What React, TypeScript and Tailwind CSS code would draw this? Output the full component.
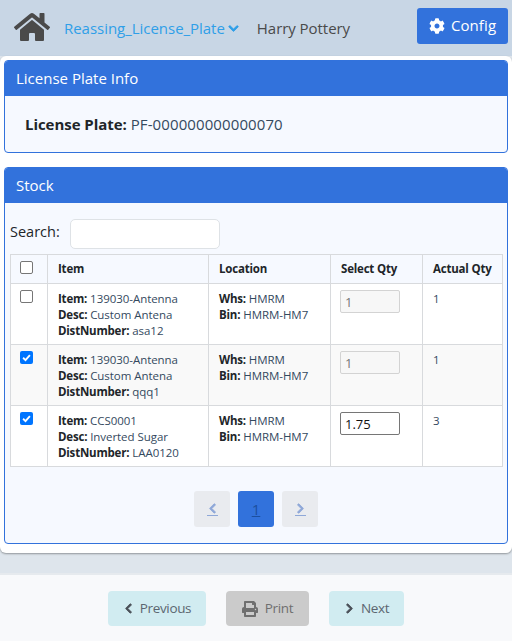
import { FaChevronDown, FaChevronLeft, FaChevronRight, FaCog, FaHome, FaPrint } from "react-icons/fa";

const rows = [
  { item: "139030-Antenna", desc: "Custom Antena", dist: "asa12", qty: "1", actual: "1", checked: false, editable: false },
  { item: "139030-Antenna", desc: "Custom Antena", dist: "qqq1", qty: "1", actual: "1", checked: true, editable: false },
  { item: "CCS0001", desc: "Inverted Sugar", dist: "LAA0120", qty: "1.75", actual: "3", checked: true, editable: true },
];

function Check({ checked }: { checked: boolean }) {
  if (checked) {
    return (
      <span className="flex h-[13px] w-[13px] items-center justify-center rounded-[2px] bg-[#0075ff]">
        <svg viewBox="0 0 12 12" className="h-[11px] w-[11px]">
          <path d="M2.3 6.3 L4.9 8.8 L9.7 3.3" fill="none" stroke="#fff" strokeWidth="2" />
        </svg>
      </span>
    );
  }
  return <span className="block h-[13px] w-[13px] rounded-[2px] border border-[#767676] bg-white" />;
}

function Card({ title, children }: { title: string; children: React.ReactNode }) {
  return (
    <section className="overflow-hidden rounded-[4px] border border-[#3272dc] bg-[#f6f9ff]">
      <h2 className="flex h-[35px] items-center bg-[#3272dc] px-[11px] pb-[1px] text-[15px] font-normal text-white">{title}</h2>
      {children}
    </section>
  );
}

export default function App() {
  return (
    <div className="flex h-[641px] w-[512px] flex-col overflow-hidden bg-[#dee5ec] font-['Open_Sans','Noto_Sans',sans-serif] text-[#212529]">
      <header className="flex h-[56px] shrink-0 items-start bg-[#c8d6e5]">
        <FaHome className="ml-[14px] mt-[9px] text-[36px] text-[#4a4a4a]" />
        <a className="ml-[14px] mt-[18px] flex items-center text-[15px] leading-[20px] tracking-[-0.03px] text-[#2f9fe8]">
          Reassing_License_Plate
          <FaChevronDown className="ml-[3px] text-[11px]" stroke="currentColor" strokeWidth={40} />
        </a>
        <span className="ml-[18px] mt-[18px] text-[15px] leading-[20px] tracking-[-0.05px] text-[#4a4a4a]">Harry Pottery</span>
        <button className="ml-auto mr-[4px] mt-[8px] flex h-[36px] w-[91px] items-center justify-center gap-[6px] rounded-[3px] bg-[#3272dc] pb-[1px] text-[15px] tracking-[0.1px] text-white">
          <FaCog className="text-[16px]" />
          Config
        </button>
      </header>

      <main className="flex h-[497px] shrink-0 flex-col gap-[14px] rounded-[6px] bg-white px-[4px] pt-[4px] shadow-[0_1px_2px_rgba(0,0,0,0.35)]">
        <Card title="License Plate Info">
          <p className="flex h-[56px] items-center px-[20px] text-[15px] tracking-[0.1px] text-[#34495e]">
            <b className="mr-[4px] font-bold tracking-[-0.05px] text-[#212529]">License Plate:</b>PF-000000000000070
          </p>
        </Card>

        <Card title="Stock">
          <div className="h-[340px] px-[5px]">
            <div className="flex h-[51px] items-end pb-[5px]">
              <div className="flex items-center">
                <label className="pb-[5px] text-[14.5px]">Search:</label>
                <input className="ml-[10px] h-[30px] w-[150px] rounded-[5px] border border-[#dee2e6] bg-white" />
              </div>
            </div>
            <table className="w-[492px] table-fixed border-collapse text-[11.5px] leading-[16px] tracking-[-0.05px] text-[#34495e]">
              <colgroup>
                <col className="w-[37px]" />
                <col className="w-[161px]" />
                <col className="w-[122px]" />
                <col className="w-[92px]" />
                <col className="w-[80px]" />
              </colgroup>
              <thead>
                <tr className="h-[29px] text-left tracking-[-0.2px] text-[#212529]">
                  <th className="border border-[#d8dadd] px-[9px] pt-[6px] align-top"><Check checked={false} /></th>
                  <th className="border border-[#d8dadd] px-[10px] font-bold">Item</th>
                  <th className="border border-[#d8dadd] px-[10px] font-bold">Location</th>
                  <th className="border border-[#d8dadd] px-[10px] font-bold">Select Qty</th>
                  <th className="border border-[#d8dadd] px-[10px] font-bold">Actual Qty</th>
                </tr>
              </thead>
              <tbody>
                {rows.map((row) => (
                  <tr key={row.dist} className={row.checked && !row.editable ? "h-[61px] bg-[#f9f9f9]" : "h-[61px] bg-white"}>
                    <td className="border border-[#d8dadd] px-[9px] pt-[6px] align-top"><Check checked={row.checked} /></td>
                    <td className="border border-[#d8dadd] px-[10px] pt-[7px] align-top">
                      <div><b className="tracking-[-0.2px] text-[#212529]">Item:</b> {row.item}</div>
                      <div><b className="tracking-[-0.2px] text-[#212529]">Desc:</b> {row.desc}</div>
                      <div><b className="tracking-[-0.2px] text-[#212529]">DistNumber:</b> {row.dist}</div>
                    </td>
                    <td className="border border-[#d8dadd] px-[10px] pt-[7px] align-top">
                      <div><b className="tracking-[-0.2px] text-[#212529]">Whs:</b> HMRM</div>
                      <div><b className="tracking-[-0.2px] text-[#212529]">Bin:</b> HMRM-HM7</div>
                    </td>
                    <td className="border border-[#d8dadd] px-[9px] pt-[6px] align-top">
                      <input
                        readOnly
                        value={row.qty}
                        className={row.editable
                          ? "block h-[23px] w-[60px] rounded-[2px] border border-[#767676] bg-white px-[4px] text-[13px] text-[#111]"
                          : "block h-[23px] w-[60px] rounded-[2px] border border-[#d3d3d3] bg-[#f7f7f7] px-[4px] text-[13px] text-[#777]"}
                      />
                    </td>
                    <td className="border border-[#d8dadd] px-[10px] pt-[7px] align-top">{row.actual}</td>
                  </tr>
                ))}
              </tbody>
            </table>
            <nav className="mt-[24px] flex justify-center gap-[8px]">
              <span className="flex h-[36px] w-[36px] items-center justify-center rounded-[3px] bg-[#e9ebef] text-[#8fa8d8]">
                <span className="border-b border-[#8fa8d8] pb-[1px]"><FaChevronLeft className="text-[11px]" stroke="currentColor" strokeWidth={40} /></span>
              </span>
              <span className="flex h-[36px] w-[36px] items-center justify-center rounded-[3px] bg-[#3272dc] text-[15px] text-[#1c4f9f] underline">1</span>
              <span className="flex h-[36px] w-[36px] items-center justify-center rounded-[3px] bg-[#e9ebef] text-[#8fa8d8]">
                <span className="border-b border-[#8fa8d8] pb-[1px]"><FaChevronRight className="text-[11px]" stroke="currentColor" strokeWidth={40} /></span>
              </span>
            </nav>
          </div>
        </Card>
      </main>

      <footer className="mt-[20px] flex flex-1 items-start justify-center gap-[20px] border-t-2 border-[#e6eaee] bg-[#f8f9fb] pt-[16px] text-[13.5px] tracking-[-0.35px] text-[#5c6670]">
        <button className="flex h-[35px] w-[98px] items-center justify-center gap-[6px] rounded-[4px] bg-[#d1ecf1]">
          <FaChevronLeft className="text-[11px] text-[#4a5058]" stroke="currentColor" strokeWidth={40} />
          Previous
        </button>
        <button className="flex h-[35px] w-[83px] items-center justify-center gap-[7px] rounded-[4px] bg-[#cbcbcb] text-[#6f6f6f]">
          <FaPrint className="text-[16px]" />
          Print
        </button>
        <button className="flex h-[35px] w-[75px] items-center justify-center gap-[6px] rounded-[4px] bg-[#d1ecf1]">
          <FaChevronRight className="text-[11px] text-[#4a5058]" stroke="currentColor" strokeWidth={40} />
          Next
        </button>
      </footer>
    </div>
  );
}
